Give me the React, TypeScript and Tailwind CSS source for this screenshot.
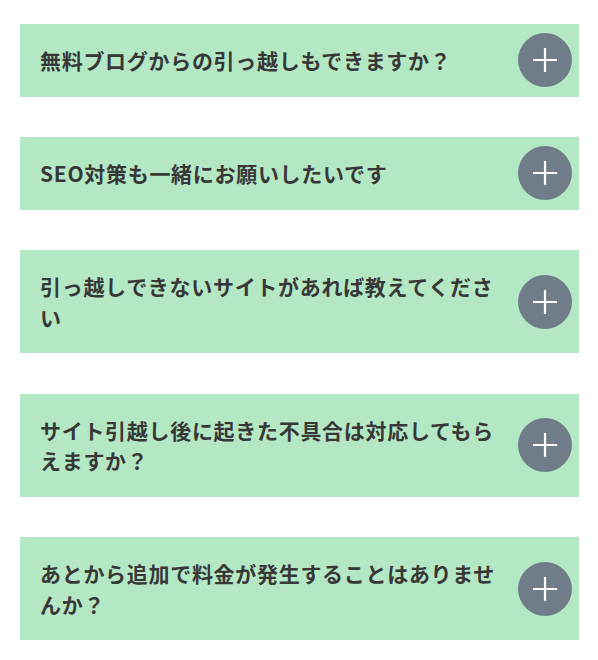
const faqs = [
  '無料ブログからの引っ越しもできますか？',
  'SEO対策も一緒にお願いしたいです',
  '引っ越しできないサイトがあれば教えてください',
  'サイト引越し後に起きた不具合は対応してもらえますか？',
  'あとから追加で料金が発生することはありませんか？',
]

function PlusCircle() {
  return (
    <span className="flex h-[54px] w-[54px] shrink-0 items-center justify-center rounded-full bg-[#707d89]">
      <svg width="26" height="26" viewBox="0 0 26 26" fill="none">
        <path d="M13 1v24M1 13h24" stroke="#fff" strokeWidth="2.2" />
      </svg>
    </span>
  )
}

export default function App() {
  return (
    <div className="min-h-screen bg-white pt-[24px] pl-[20px] pr-[19px]">
      <div className="flex flex-col gap-[40.6px]">
        {faqs.map((q) => (
          <div key={q} className="flex items-center justify-between bg-[#b4e8c5] pl-[20px] pr-[7px]">
            <p
              className="max-w-[462px] py-[21px] text-[21px] font-bold leading-[30.5px] tracking-[0.7px] text-[#383838]"
              style={{ fontFamily: '"Noto Sans CJK JP", "Noto Sans", sans-serif' }}
            >
              {q}
            </p>
            <PlusCircle />
          </div>
        ))}
      </div>
    </div>
  )
}
